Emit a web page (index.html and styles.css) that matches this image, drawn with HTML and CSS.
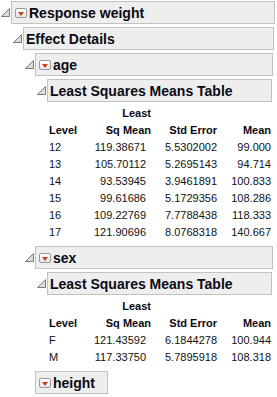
FILE: index.html
```html
<!DOCTYPE html>
<html lang="en">
<head>
    <meta charset="UTF-8">
    <title>Response weight</title>
    <link rel="stylesheet" href="styles.css">
</head>
<body>

    <div class="node">
        <div class="head">
            <span class="tri"><svg width="9" height="9" viewBox="0 0 9 9"><polygon points="8.5,0.5 8.5,8.5 0.5,8.5" /></svg></span>
            <div class="hdr"><span class="btn"></span>Response weight</div>
        </div>
        <div class="body">

            <div class="node">
                <div class="head">
                    <span class="tri"><svg width="9" height="9" viewBox="0 0 9 9"><polygon points="8.5,0.5 8.5,8.5 0.5,8.5" /></svg></span>
                    <div class="hdr plain">Effect Details</div>
                </div>
                <div class="body">

                    <div class="node">
                        <div class="head">
                            <span class="tri"><svg width="9" height="9" viewBox="0 0 9 9"><polygon points="8.5,0.5 8.5,8.5 0.5,8.5" /></svg></span>
                            <div class="hdr"><span class="btn"></span>age</div>
                        </div>
                        <div class="body">
                            <div class="node">
                                <div class="head">
                                    <span class="tri"><svg width="9" height="9" viewBox="0 0 9 9"><polygon points="8.5,0.5 8.5,8.5 0.5,8.5" /></svg></span>
                                    <div class="hdr plain">Least Squares Means Table</div>
                                </div>
                                <div class="body">
                                    <table class="lsm">
                                        <thead>
                                            <tr><th></th><th class="num">Least</th><th></th><th></th></tr>
                                            <tr><th class="lvl">Level</th><th class="num">Sq Mean</th><th class="num">Std Error</th><th class="num">Mean</th></tr>
                                        </thead>
                                        <tbody>
                                            <tr><td>12</td><td class="num pad">119.38671</td><td class="num">5.5302002</td><td class="num">99.000</td></tr>
                                            <tr><td>13</td><td class="num pad">105.70112</td><td class="num">5.2695143</td><td class="num">94.714</td></tr>
                                            <tr><td>14</td><td class="num pad">93.53945</td><td class="num">3.9461891</td><td class="num">100.833</td></tr>
                                            <tr><td>15</td><td class="num pad">99.61686</td><td class="num">5.1729356</td><td class="num">108.286</td></tr>
                                            <tr><td>16</td><td class="num pad">109.22769</td><td class="num">7.7788438</td><td class="num">118.333</td></tr>
                                            <tr><td>17</td><td class="num pad">121.90696</td><td class="num">8.0768318</td><td class="num">140.667</td></tr>
                                        </tbody>
                                    </table>
                                </div>
                            </div>
                        </div>
                    </div>

                    <div class="node">
                        <div class="head">
                            <span class="tri"><svg width="9" height="9" viewBox="0 0 9 9"><polygon points="8.5,0.5 8.5,8.5 0.5,8.5" /></svg></span>
                            <div class="hdr"><span class="btn"></span>sex</div>
                        </div>
                        <div class="body">
                            <div class="node">
                                <div class="head">
                                    <span class="tri"><svg width="9" height="9" viewBox="0 0 9 9"><polygon points="8.5,0.5 8.5,8.5 0.5,8.5" /></svg></span>
                                    <div class="hdr plain">Least Squares Means Table</div>
                                </div>
                                <div class="body">
                                    <table class="lsm">
                                        <thead>
                                            <tr><th></th><th class="num">Least</th><th></th><th></th></tr>
                                            <tr><th class="lvl">Level</th><th class="num">Sq Mean</th><th class="num">Std Error</th><th class="num">Mean</th></tr>
                                        </thead>
                                        <tbody>
                                            <tr><td>F</td><td class="num pad">121.43592</td><td class="num">6.1844278</td><td class="num">100.944</td></tr>
                                            <tr><td>M</td><td class="num pad">117.33750</td><td class="num">5.7895918</td><td class="num">108.318</td></tr>
                                        </tbody>
                                    </table>
                                </div>
                            </div>
                        </div>
                    </div>

                    <div class="node">
                        <div class="head">
                            <span class="tri"></span>
                            <div class="hdr closed"><span class="btn"></span>height</div>
                        </div>
                    </div>

                </div>
            </div>

        </div>
    </div>

</body>
</html>
```

FILE: styles.css
```css
body {
    margin: 1px 2px 0 0;
    background: #ffffff;
    font-family: 'Liberation Sans', Arial, sans-serif;
    color: #111;
}

.head {
    display: flex;
    align-items: center;
    height: 23px;
    margin-bottom: 3px;
}

.tri {
    width: 11px;
    flex: none;
    display: flex;
    justify-content: flex-start;
    padding-left: 1px;
    box-sizing: border-box;
}

.tri polygon {
    fill: #dcdcdc;
    stroke: #7a7a7a;
    stroke-width: 1;
}

.hdr {
    flex: 1;
    height: 23px;
    box-sizing: border-box;
    display: flex;
    align-items: center;
    background: #eeeeee;
    border: 1px solid #c2c2c2;
    padding-left: 3px;
    font-size: 14px;
    font-weight: bold;
    color: #0a0a14;
    white-space: nowrap;
}

.hdr.plain {
    padding-left: 2px;
}

.hdr.closed {
    flex: none;
    padding-right: 12px;
}

.btn {
    width: 12px;
    height: 10px;
    box-sizing: border-box;
    border: 1px solid #9a9a9a;
    border-radius: 2px;
    background: linear-gradient(#ffffff, #e6e6e6);
    margin-right: 2px;
    position: relative;
    flex: none;
}

.btn::after {
    content: '';
    position: absolute;
    left: 2px;
    top: 3px;
    border-left: 3px solid transparent;
    border-right: 3px solid transparent;
    border-top: 4px solid #c8401e;
}

.body {
    margin-left: 11px;
    padding-left: 1px;
    padding-right: 1px;
}

.lsm {
    border-collapse: collapse;
    margin: 0 0 5px 1px;
    font-size: 11px;
    table-layout: fixed;
}

.lsm th,
.lsm td {
    padding: 0;
    height: 17px;
    line-height: 17px;
    white-space: nowrap;
}

.lsm th {
    font-weight: bold;
    color: #0a0a14;
}

.lsm th:nth-child(1) { width: 45px; text-align: left; }
.lsm th:nth-child(2) { width: 53px; }
.lsm th:nth-child(3) { width: 66px; }
.lsm th:nth-child(4) { width: 54px; }

.lsm .num {
    text-align: right;
}

.lsm td.pad {
    padding-right: 5px;
}
```
